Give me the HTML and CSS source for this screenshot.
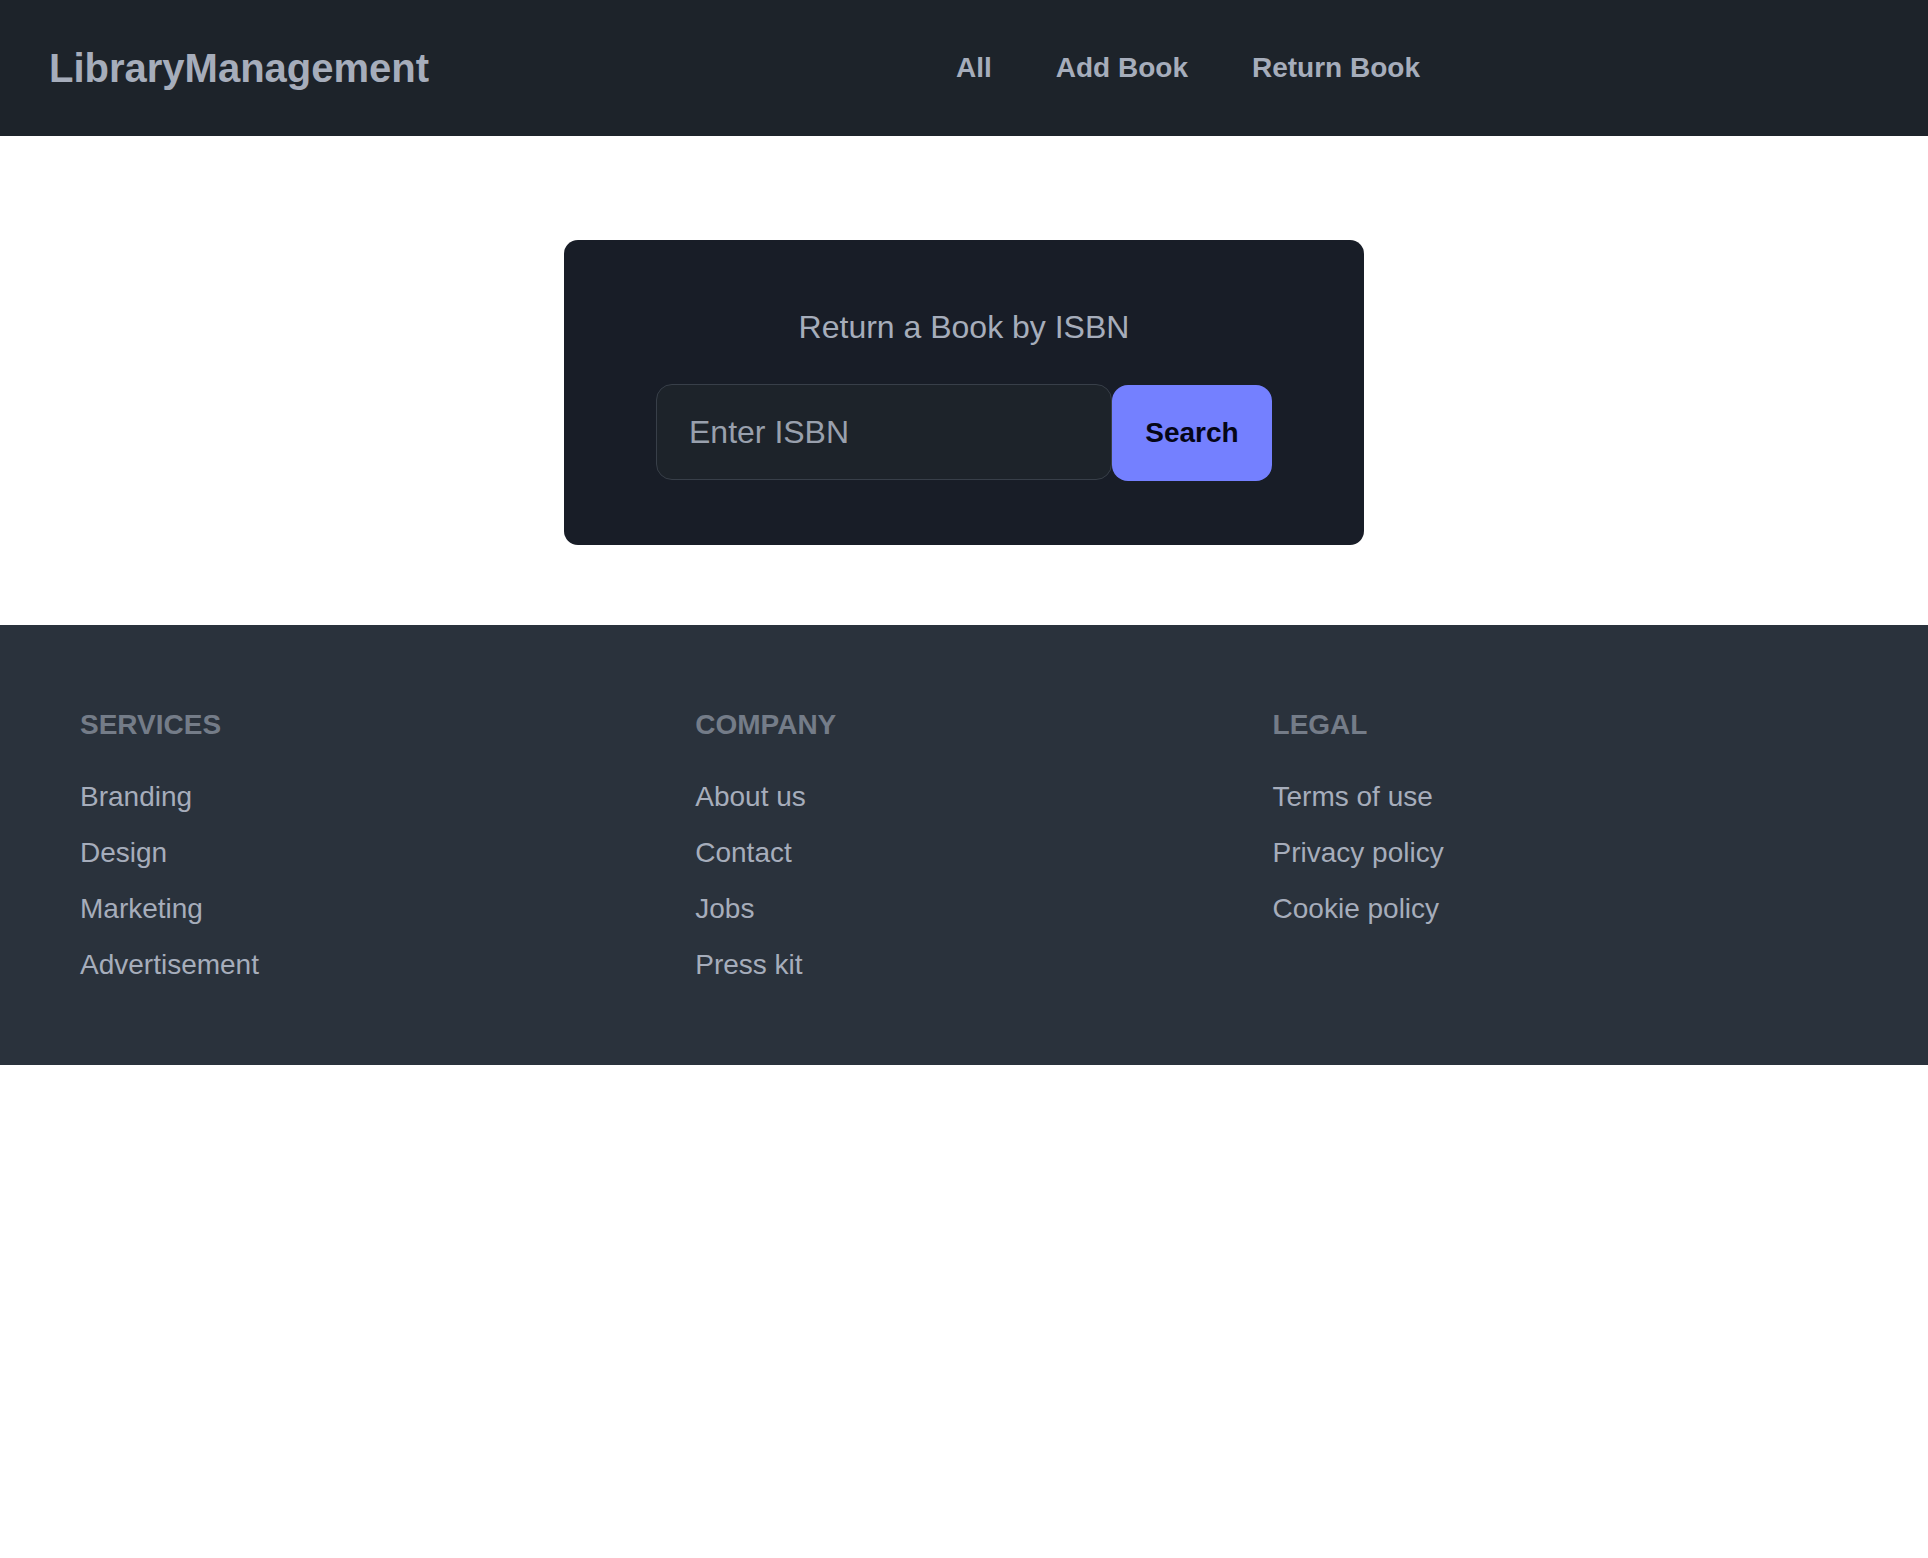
FILE: index.html
```html
<!DOCTYPE html>
<html lang="en">
<head>
<meta charset="utf-8">
<title>LibraryManagement</title>
<link rel="stylesheet" href="styles.css">
</head>
<body>
<header class="navbar">
  <a class="brand" href="#">LibraryManagement</a>
  <nav class="menu">
    <a class="menu-link" href="#">All</a>
    <a class="menu-link" href="#">Add Book</a>
    <a class="menu-link" href="#">Return Book</a>
  </nav>
</header>

<main class="main">
  <section class="card">
    <h2 class="card-title">Return a Book by ISBN</h2>
    <form class="search-row">
      <input class="isbn-input" type="text" placeholder="Enter ISBN">
      <button class="search-btn" type="button">Search</button>
    </form>
  </section>
</main>

<footer class="footer">
  <div class="footer-col">
    <h6 class="footer-title">SERVICES</h6>
    <a class="footer-link" href="#">Branding</a>
    <a class="footer-link" href="#">Design</a>
    <a class="footer-link" href="#">Marketing</a>
    <a class="footer-link" href="#">Advertisement</a>
  </div>
  <div class="footer-col">
    <h6 class="footer-title">COMPANY</h6>
    <a class="footer-link" href="#">About us</a>
    <a class="footer-link" href="#">Contact</a>
    <a class="footer-link" href="#">Jobs</a>
    <a class="footer-link" href="#">Press kit</a>
  </div>
  <div class="footer-col">
    <h6 class="footer-title">LEGAL</h6>
    <a class="footer-link" href="#">Terms of use</a>
    <a class="footer-link" href="#">Privacy policy</a>
    <a class="footer-link" href="#">Cookie policy</a>
  </div>
</footer>
</body>
</html>
```

FILE: styles.css
```css
* {
  box-sizing: border-box;
}

body {
  margin: 0;
  background: #ffffff;
  font-family: "Liberation Sans", Arial, sans-serif;
  color: #a6adbb;
}

a {
  text-decoration: none;
  color: inherit;
}

.navbar {
  display: flex;
  align-items: center;
  height: 136px;
  padding: 0 0 0 49px;
  background: #1d232a;
}

.brand {
  flex: 0 0 875px;
  font-size: 40px;
  font-weight: 700;
  line-height: 48px;
  color: #a6adbb;
}

.menu {
  display: flex;
  align-items: center;
}

.menu-link {
  padding: 0 32px;
  font-size: 28px;
  font-weight: 700;
  line-height: 40px;
  color: #a6adbb;
}

.main {
  display: flex;
  justify-content: center;
  padding: 104px 0 80px;
}

.card {
  width: 800px;
  padding: 67px 0 64px;
  background: #181d27;
  border-radius: 14px;
  display: flex;
  flex-direction: column;
  align-items: center;
}

.card-title {
  margin: 0 0 37px;
  font-size: 32px;
  font-weight: 400;
  line-height: 40px;
  color: #a6adbb;
}

.search-row {
  display: flex;
  align-items: flex-start;
  margin: 0;
}

.isbn-input {
  width: 456px;
  height: 96px;
  padding: 0 32px;
  font-family: "Liberation Sans", Arial, sans-serif;
  font-size: 32px;
  color: #a6adbb;
  background: #1d232a;
  border: 1px solid #383f49;
  border-radius: 16px;
  outline: none;
}

.isbn-input::placeholder {
  color: #99a0ad;
  opacity: 1;
}

.search-btn {
  width: 160px;
  height: 96px;
  margin-top: 1px;
  padding: 0;
  font-family: "Liberation Sans", Arial, sans-serif;
  font-size: 28px;
  font-weight: 700;
  color: #050617;
  background: #7480ff;
  border: none;
  border-radius: 16px;
}

.footer {
  display: grid;
  grid-auto-flow: column;
  justify-content: stretch;
  justify-items: start;
  column-gap: 32px;
  padding: 80px;
  background: #2a323c;
}

.footer-col {
  display: flex;
  flex-direction: column;
  align-items: flex-start;
  gap: 16px;
}

.footer-title {
  margin: 0 0 16px;
  font-size: 28px;
  font-weight: 700;
  line-height: 40px;
  color: #747c88;
}

.footer-link {
  font-size: 28px;
  line-height: 40px;
  color: #a6adbb;
}
```
